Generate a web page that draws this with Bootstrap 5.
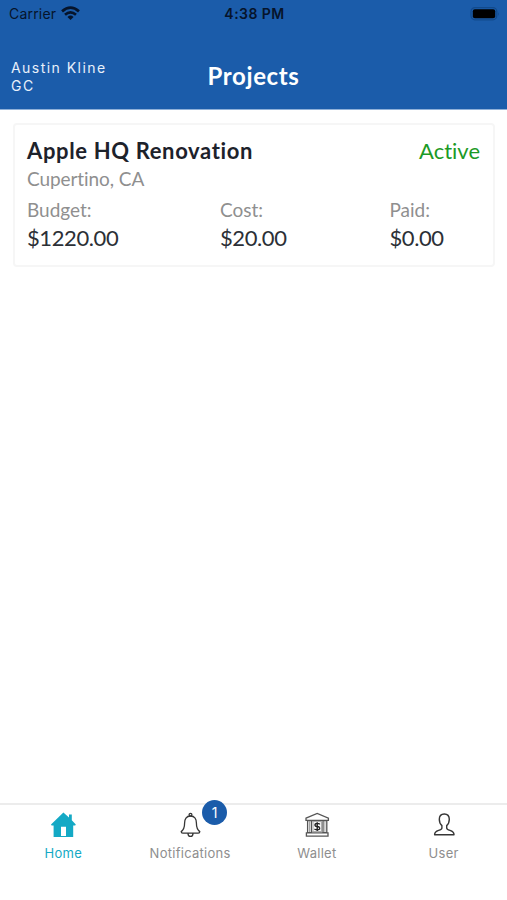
<!DOCTYPE html>
<html lang="en">
<head>
<meta charset="utf-8">
<meta name="viewport" content="width=device-width, initial-scale=1">
<title>Projects</title>
<link href="https://cdn.jsdelivr.net/npm/bootstrap@5.3.0/dist/css/bootstrap.min.css" rel="stylesheet">
<style>
body{font-family:Lato,"Open Sans",sans-serif;font-variant-ligatures:none;background:#fff;color:#1d222b}
svg{display:block}
.app-header{background:#1b5caa;height:110px;border-bottom:1px solid #8fb0d8}
.status-bar{height:28px;font:400 14px/28px Inter,sans-serif;color:#06142b;padding:0 7px 0 9px}
.status-bar .clock{font-weight:600;letter-spacing:.45px}
.carrier{letter-spacing:.2px}
.wifi{margin-left:1px;margin-top:-2px}
.title-bar{height:81px;padding:11px 11px 0}
.who{font:400 14px/18px Inter,sans-serif;letter-spacing:1.46px;margin-top:20px;color:#e8f0fb}
.page-title{font-weight:700;font-size:24px;line-height:30px;letter-spacing:.6px;margin-top:22px}
.side{flex:1 1 0}
.project{margin:13px 12px 0 13px;height:144px;border:2px solid #f6f6f6;border-radius:4px;padding:11px 13px 0 12px}
.project-name{font-weight:700;font-size:22px;line-height:30px;letter-spacing:.64px}
.state{font-size:22px;line-height:30px;color:#1b9a26}
.muted-line{font-size:19px;line-height:26px;color:#8f8f8f}
.place{letter-spacing:-.08px}
.amount{font-size:22px;line-height:28px;color:#2c3036;letter-spacing:-.4px}
.figures{display:grid;grid-template-columns:193px 169.5px auto;margin-top:5px}
.figures .amount{margin-top:1px}
.tabs{height:97px;border-top:2px solid #ececec}
.tab-link{flex:1 1 0;font:400 13px/16px Inter,sans-serif;letter-spacing:.27px;color:#8e8e8e;padding-top:7px}
.tab-link.active{color:#14a9c5}
.tab-link svg{margin-bottom:7px}
.count{left:25px;top:-12px;width:25px;height:25px;font:400 14px/25px Inter,sans-serif;background:#1b5caa;letter-spacing:0}
</style>
</head>
<body class="d-flex flex-column vh-100 overflow-hidden">
<header class="app-header text-white">
  <div class="status-bar d-flex align-items-center">
    <div class="side d-flex align-items-center gap-1"><span class="carrier">Carrier</span>
      <svg class="wifi" width="19" height="15" viewBox="0 0 18 14" fill="none" stroke="currentColor" stroke-width="2.6"><path d="M1 5Q9-2 17 5M3.8 8.2Q9 3.8 14.2 8.2"/><path d="M6.1 10.2Q9 7.8 11.9 10.2L9 13.2Z" fill="currentColor" stroke="none"/></svg>
    </div>
    <span class="clock">4:38 PM</span>
    <div class="side d-flex justify-content-end">
      <svg width="30" height="14" viewBox="0 0 30 14"><rect x="1" y=".6" width="25.8" height="12.2" rx="4" fill="none" stroke="#124a8c" stroke-width="1.2"/><rect x="2.8" y="2.2" width="22.4" height="9" rx="2" fill="#000"/><path d="M28 5q1.6 2 0 4Z" fill="#124a8c"/></svg>
    </div>
  </div>
  <div class="title-bar d-flex">
    <div class="side"><div class="who">Austin Kline<br>GC</div></div>
    <h1 class="page-title mb-0">Projects</h1>
    <div class="side"></div>
  </div>
</header>
<main class="flex-grow-1">
  <article class="project">
    <div class="d-flex justify-content-between"><span class="project-name">Apple HQ Renovation</span><span class="state">Active</span></div>
    <div class="muted-line place">Cupertino, CA</div>
    <div class="figures">
      <div><div class="muted-line">Budget:</div><div class="amount">$1220.00</div></div>
      <div><div class="muted-line">Cost:</div><div class="amount">$20.00</div></div>
      <div><div class="muted-line">Paid:</div><div class="amount">$0.00</div></div>
    </div>
  </article>
</main>
<nav class="tabs d-flex">
  <a class="tab-link active d-flex flex-column align-items-center text-decoration-none" href="#">
    <svg width="26" height="26" viewBox="0 0 26 26" fill="currentColor"><path fill-rule="evenodd" d="M13.4.6 19 5.6V2.4h2.8v5.8l4 4.2-.6 1H23.2V25H3.6V13.4H1.6L1 12.4ZM11 14.8V24H16V14.8Z"/></svg>
    <span>Home</span></a>
  <a class="tab-link d-flex flex-column align-items-center text-decoration-none" href="#">
    <span class="position-relative"><svg width="26" height="26" viewBox="0 0 26 26" fill="none" stroke="#363636" stroke-width="1.3"><circle cx="13.5" cy="2.7" r="1.4"/><path d="M13.5 4C9.2 4 7.6 7.2 7.6 11 7.6 15.6 7 17.6 4.2 19.6Q4.2 21.2 5.8 21.2H21.2Q22.8 21.2 22.8 19.6C20 17.6 19.4 15.6 19.4 11 19.4 7.2 17.8 4 13.5 4ZM11 21.4Q11 24.4 13.5 24.4T16 21.4"/></svg><span class="count position-absolute rounded-circle text-white text-center">1</span></span>
    <span>Notifications</span></a>
  <a class="tab-link d-flex flex-column align-items-center text-decoration-none" href="#">
    <svg width="26" height="26" viewBox="0 0 26 26" fill="none" stroke="#555" stroke-width="1.3"><path d="M2 6.2 13.2 1.4 24.4 6.2V8.4H2ZM3.6 8.6H7.4V20.6H3.6ZM19 8.6H22.8V20.6H19ZM2.4 20.8H24V24.2H2.4Z"/><path d="M5.5 9V20M20.9 9V20M8 9.6H18.4M8 19.6H18.4M9 10V19M17.4 10V19" stroke="#999" stroke-width=".9"/><path d="M15.8 12.3Q15.2 11.4 13.2 11.4 11 11.4 11 13T13.2 14.5 15.6 16.2 13.2 17.8 10.7 16.8M13.2 10.2V19" stroke="#222" stroke-width="1.4"/></svg>
    <span>Wallet</span></a>
  <a class="tab-link d-flex flex-column align-items-center text-decoration-none" href="#">
    <svg width="26" height="26" viewBox="0 0 26 26" fill="none" stroke="#363636" stroke-width="1.4" stroke-linejoin="round"><path d="M13.3 2C10 2 8.3 4.2 8.3 7.3 8.3 10.2 9.3 12.2 10.9 13.6V16C10.9 17.2 9.6 17.8 7.6 18.4 4.6 19.3 3.6 20.4 3.6 22.8H23C23 20.4 22 19.3 19 18.4 17 17.8 15.7 17.2 15.7 16V13.6C17.3 12.2 18.3 10.2 18.3 7.3 18.3 4.2 16.6 2 13.3 2Z"/></svg>
    <span>User</span></a>
</nav>
<script src="https://cdn.jsdelivr.net/npm/bootstrap@5.3.0/dist/js/bootstrap.bundle.min.js"></script>
</body>
</html>
